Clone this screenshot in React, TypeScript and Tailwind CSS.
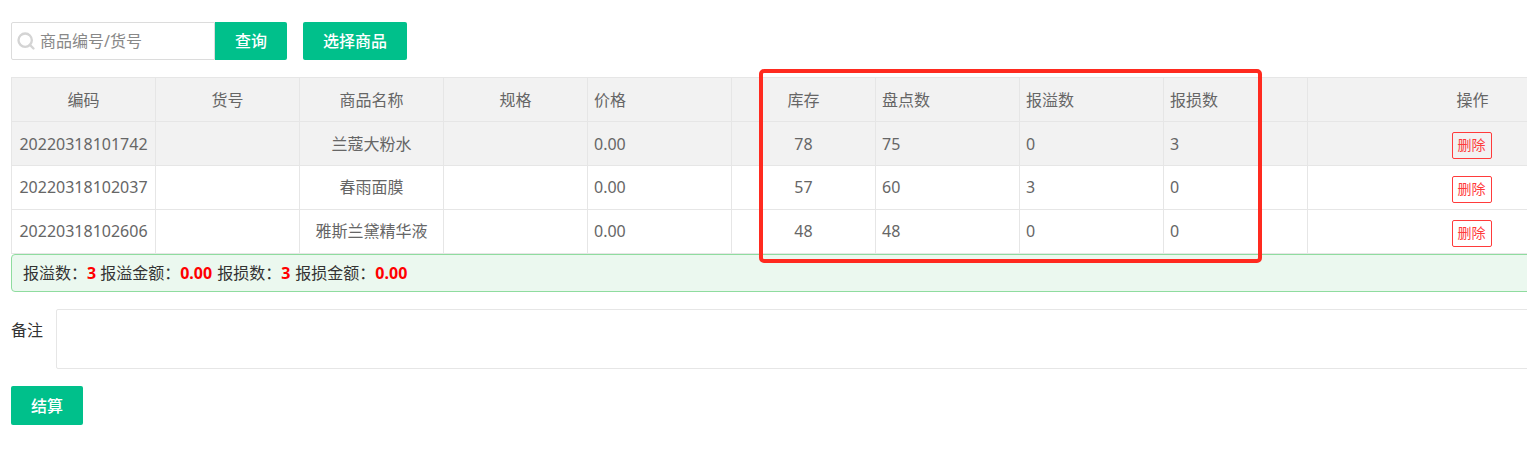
import { Search } from 'lucide-react'

const ROWS = [
  { code: '20220318101742', name: '兰蔻大粉水', price: '0.00', stock: '78', count: '75', over: '0', loss: '3' },
  { code: '20220318102037', name: '春雨面膜', price: '0.00', stock: '57', count: '60', over: '3', loss: '0' },
  { code: '20220318102606', name: '雅斯兰黛精华液', price: '0.00', stock: '48', count: '48', over: '0', loss: '0' },
]

const HEADERS = [
  { label: '编码', left: false },
  { label: '货号', left: false },
  { label: '商品名称', left: false },
  { label: '规格', left: false },
  { label: '价格', left: true },
  { label: '库存', left: false },
  { label: '盘点数', left: true },
  { label: '报溢数', left: true },
  { label: '报损数', left: true },
  { label: '操作', left: false, wide: true },
]

const cell = 'h-11 border border-[#e6e6e6] px-[6px] font-normal'

export default function App() {
  return (
    <div className="relative h-[475px] w-[1527px] overflow-hidden bg-white font-['Noto_Sans','Noto_Sans_CJK_SC',sans-serif] text-base text-[#666]">
      <div className="w-[1637px] pl-[11px] pt-[22px]">
        {/* Search bar */}
        <div className="flex h-[38px]">
          <div className="flex w-[204px] items-center rounded-l-[2px] border border-[#dcdcdc] pl-1">
            <Search size={20} strokeWidth={2.8} className="text-[#d4d4d4]" />
            <span className="ml-1 text-[#888]">商品编号/货号</span>
          </div>
          <button className="w-[72px] rounded-r-[2px] bg-[#00c08b] font-medium text-white">查询</button>
          <button className="ml-4 w-[104px] rounded-[2px] bg-[#00c08b] font-medium text-white">选择商品</button>
        </div>

        {/* Table */}
        <table className="mt-[17px] w-[1626px] table-fixed border-collapse">
          <colgroup>
            {HEADERS.map((h, i) => (
              <col key={i} className={h.wide ? 'w-[330px]' : 'w-[144px]'} />
            ))}
          </colgroup>
          <thead>
            <tr className="bg-[#f2f2f2]">
              {HEADERS.map((h, i) => (
                <th key={i} className={`${cell} ${h.left ? 'text-left' : 'text-center'}`}>
                  {h.label}
                </th>
              ))}
            </tr>
          </thead>
          <tbody>
            {ROWS.map((r, i) => {
              const td = i > 0 ? `${cell} pb-[2px]` : cell
              return (
                <tr key={r.code} className={i === 0 ? 'bg-[#f2f2f2]' : ''}>
                  <td className={`${td} text-center`}>{r.code}</td>
                  <td className={td}></td>
                  <td className={`${td} text-center`}>{r.name}</td>
                  <td className={td}></td>
                  <td className={td}>{r.price}</td>
                  <td className={`${td} text-center`}>{r.stock}</td>
                  <td className={td}>{r.count}</td>
                  <td className={td}>{r.over}</td>
                  <td className={td}>{r.loss}</td>
                  <td className={`${cell} text-center`}>
                    <button className="mx-auto mt-[3px] block h-[27px] w-10 -translate-x-px rounded-[2px] border border-[#ff3b3b] text-sm leading-none text-[#ff3b3b]">删除</button>
                  </td>
                </tr>
              )
            })}
          </tbody>
        </table>

        {/* Summary */}
        <div className="flex h-[38px] items-center rounded-[4px] border border-[#8fdc9f] bg-[#ebf8ef] pl-[11px] text-[#333]">
          报溢数：<b className="mr-1 text-[#ff0000]">3</b>报溢金额：<b className="mr-[5px] text-[#ff0000]">0.00</b>报损数：<b className="mr-[5px] text-[#ff0000]">3</b>报损金额：<b className="text-[#ff0000]">0.00</b>
        </div>

        {/* Remark */}
        <div className="mt-[17px] flex items-start">
          <label className="mt-[9px] w-[45px] text-[#333]">备注</label>
          <div className="h-[60px] flex-1 rounded-[2px] border border-[#e6e6e6]"></div>
        </div>

        <button className="mt-[17px] h-[39px] w-[72px] rounded-[2px] bg-[#00c08b] font-medium text-white">结算</button>
      </div>

      {/* Red annotation box */}
      <div className="absolute left-[759px] top-[69px] h-[194px] w-[503px] rounded-[5px] border-4 border-[#ff2a1f]"></div>
    </div>
  )
}
